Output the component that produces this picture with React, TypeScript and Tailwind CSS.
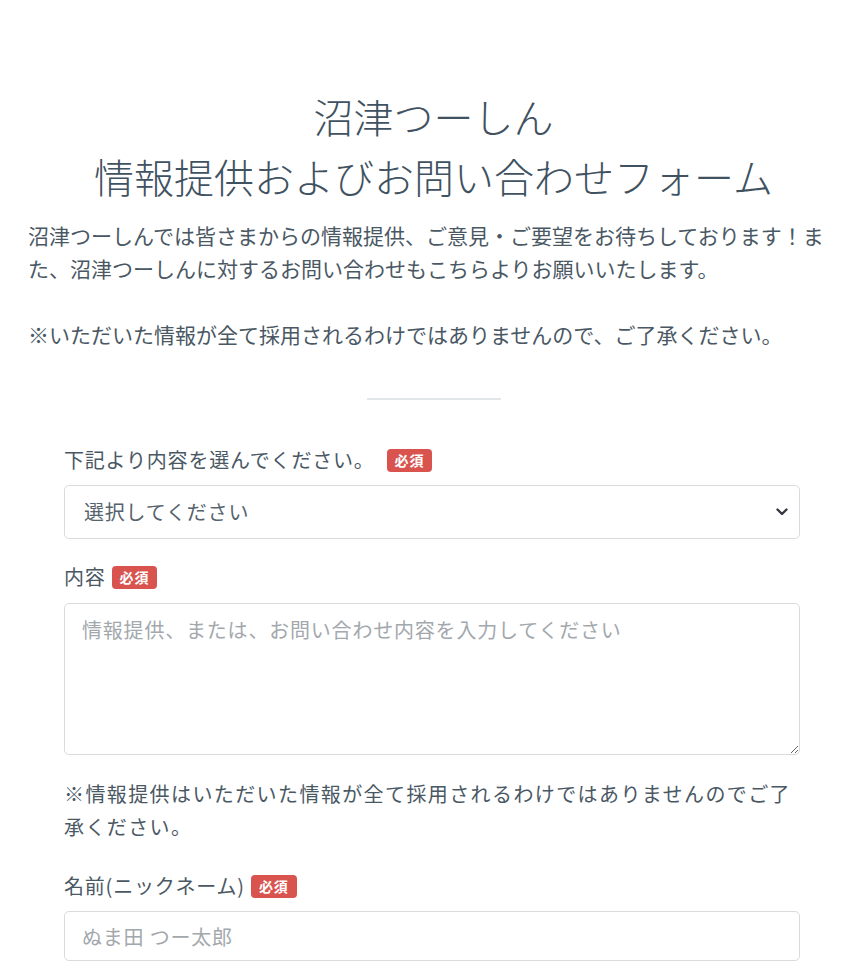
const font = { fontFamily: '"Noto Sans CJK JP", "Noto Sans", sans-serif' };

const Badge = ({ className = "" }: { className?: string }) => (
  <span
    className={`inline-flex h-[23px] items-center rounded-[4px] bg-[#d9534f] px-[8px] text-[14px] font-bold leading-none text-white ${className}`}
  >
    必須
  </span>
);

const App = () => {
  return (
    <div className="min-h-screen bg-white text-[#4a5864]" style={font}>
      <div className="px-[28px] pt-[86px] pb-10">
        <h1 className="text-center text-[40px] font-light leading-[60px] text-[#3f5261]">
          沼津つーしん
          <br />
          情報提供およびお問い合わせフォーム
        </h1>

        <p className="mt-[13px] text-[21px] leading-[33px]">
          沼津つーしんでは皆さまからの情報提供、ご意見・ご要望をお待ちしております！また、沼津つーしんに対するお問い合わせもこちらよりお願いいたします。
          <br />
          <br />
          ※いただいた情報が全て採用されるわけではありませんので、ご了承ください。
        </p>

        <div className="mx-auto mt-[47px] h-[2px] w-[134px] bg-[#e1e6e9]"></div>

        <form className="ml-[36px] mt-[45px] w-[736px]">
          <label className="flex h-[30px] items-center text-[20px] tracking-[0.8px]">
            下記より内容を選んでください。
            <Badge className="ml-[12px]" />
          </label>
          <div className="relative mt-[10px]">
            <select className="h-[54px] w-full appearance-none rounded-[5px] border border-[#d8dcdf] bg-white pl-[19px] text-[20px] tracking-[0.8px] text-[#56636d] outline-none">
              <option>選択してください</option>
            </select>
            <svg
              className="pointer-events-none absolute right-[12px] top-1/2 -translate-y-1/2"
              width="12"
              height="9"
              viewBox="0 0 12 9"
              fill="none"
            >
              <path
                d="M1.5 2l4.5 4.5L10.5 2"
                stroke="#343a40"
                strokeWidth="2.4"
                strokeLinecap="round"
                strokeLinejoin="round"
              />
            </svg>
          </div>

          <label className="mt-[23px] flex h-[30px] items-center text-[20px] tracking-[0.8px]">
            内容
            <Badge className="ml-[6px]" />
          </label>
          <textarea
            className="mt-[11px] block h-[152px] w-full rounded-[5px] border border-[#d8dcdf] px-[17px] py-[11px] text-[20px] leading-[30px] tracking-[0.8px] outline-none placeholder:text-[#a3a8ad]"
            placeholder="情報提供、または、お問い合わせ内容を入力してください"
          ></textarea>

          <p className="mt-[22px] text-[20px] leading-[33px] tracking-[1.4px]">
            ※情報提供はいただいた情報が全て採用されるわけではありませんのでご了承ください。
          </p>

          <label className="mt-[28px] flex h-[30px] items-center text-[20px] tracking-[0.8px]">
            名前(ニックネーム)
            <Badge className="ml-[6px]" />
          </label>
          <input
            className="mt-[10px] block h-[50px] w-full rounded-[5px] border border-[#d8dcdf] px-[17px] text-[20px] tracking-[0.8px] outline-none placeholder:text-[#a3a8ad]"
            placeholder="ぬま田 つー太郎"
          />
        </form>
      </div>
    </div>
  );
};

export default App;
